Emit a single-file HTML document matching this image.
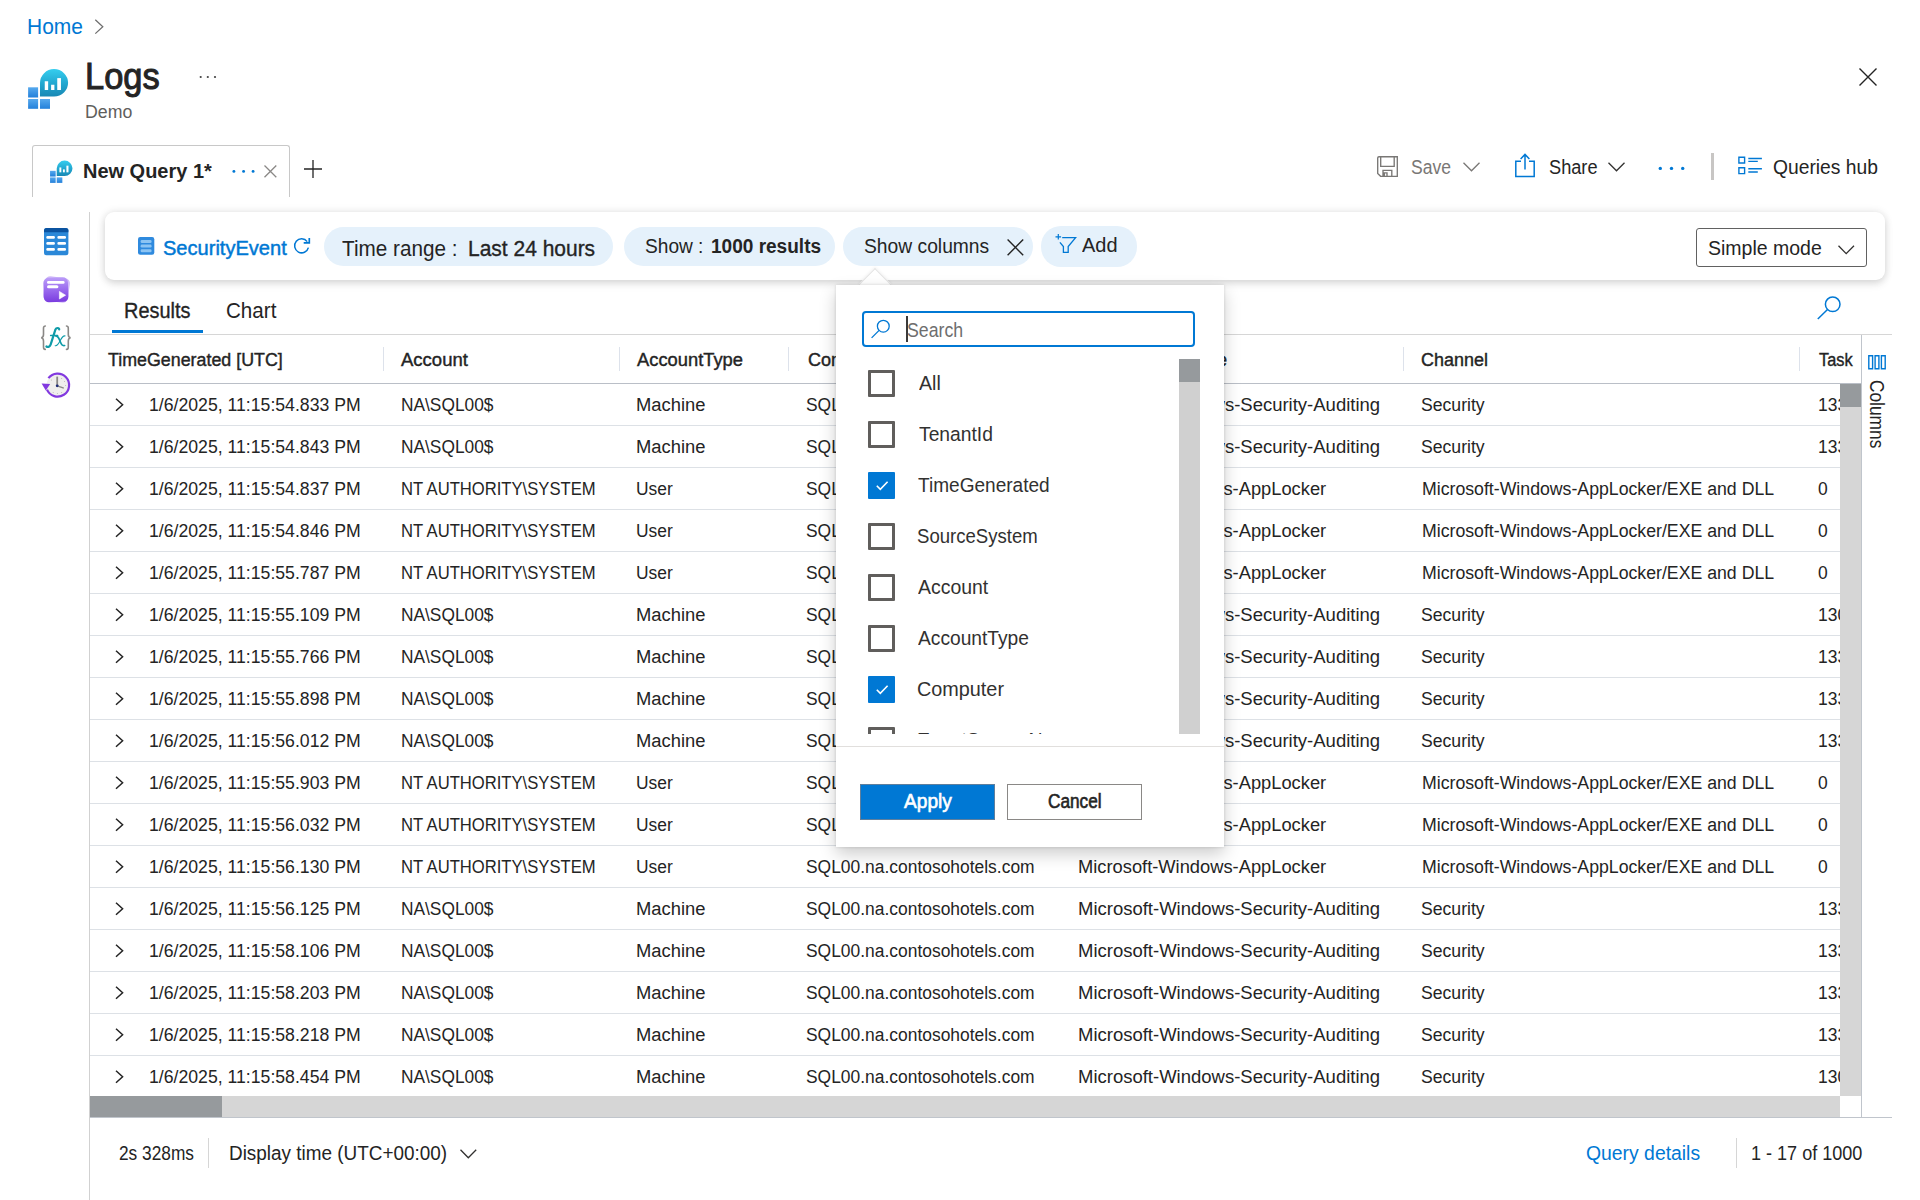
<!DOCTYPE html>
<html>
<head>
<meta charset="utf-8">
<title>Logs</title>
<style>
*{box-sizing:border-box;margin:0;padding:0}
html,body{width:1920px;height:1200px;overflow:hidden;background:#fff}
body{font-family:"Liberation Sans",sans-serif;color:#242424;position:relative}
.a{position:absolute}
.t{position:absolute;white-space:nowrap;line-height:1;color:#242424}
.blue{color:#0078d4}
.sb{font-weight:bold}
svg{position:absolute;overflow:visible}
/* ---------- header ---------- */
#home{left:27px;top:16px;font-size:20.4px;color:#0078d4}
#logs{left:84px;top:58px;font-size:36px;-webkit-text-stroke:1px #242424;color:#242424}
#demo{left:85px;top:102px;font-size:18px;color:#605e5c}
#tab{left:32px;top:145px;width:258px;height:52px;border:1px solid #c8c8c8;border-bottom:none;border-radius:3px 3px 0 0}
#tabname{left:84px;top:161px;font-size:19px;font-weight:bold}
.cmd{font-size:19px;top:157px}
/* ---------- toolbar card ---------- */
#card{left:105px;top:212px;width:1780px;height:68px;border-radius:9px;background:#fff;box-shadow:0 0 8px rgba(0,0,0,.11),0 4px 9px rgba(0,0,0,.11)}
.pill{position:absolute;top:227px;height:39px;border-radius:20px;background:#e5f1fb}
#navline{left:89px;top:212px;width:1px;height:988px;background:#d1d1d1}

/* ---------- table ---------- */
.hd{position:absolute;top:350px;font-size:17.5px;white-space:nowrap;line-height:1;color:#242424;-webkit-text-stroke:0.4px #242424}
.hs{position:absolute;top:347px;width:1px;height:24px;background:#dde2eb}
.row{position:absolute;left:90px;width:1750px;height:42px;border-bottom:1px solid #dde1e6;overflow:hidden}
.row span{position:absolute;top:12px;font-size:17.5px;line-height:1;white-space:nowrap;color:#242424}
.row svg{left:25px;top:14.4px}
.c1{left:60px}
.c2{left:312px}
.c3{left:547px}
.c4{left:717px}
.c5{left:988px}
.c6{left:1332px}
.c7{left:1728px}
.ft{font-size:19px;top:1144px}

/* ---------- popup ---------- */
#pop{left:836px;top:285px;width:388px;height:562px;background:#fff;box-shadow:0 0 3px rgba(0,0,0,.14),0 7px 16px rgba(0,0,0,.2)}
#beak{left:862.5px;top:273px;width:24px;height:24px;background:#fff;transform:rotate(45deg);border-left:1px solid #e4e4e4;border-top:1px solid #e4e4e4;box-shadow:-1px -1px 3px rgba(0,0,0,.05)}
#beakcover{left:850px;top:285px;width:50px;height:20px;background:#fff}
#sbox{left:862px;top:311px;width:333px;height:36px;border:2px solid #0078d4;border-radius:4px;background:#fff}
#list{left:836px;top:359px;width:364px;height:375px;overflow:hidden}
.cb{position:absolute;left:32px;width:27px;height:27px;border:3px solid #605e5c;border-radius:1px;background:#fff}
.cb.on{border:none;background:#0078d4}
.cb.on svg{left:0;top:0}
.lb{position:absolute;left:82px;font-size:19px;line-height:1;white-space:nowrap;color:#323130}
#apply{left:860px;top:784px;width:135px;height:36px;background:#0078d4;border:1px solid #5f7f9d}
#cancel{left:1007px;top:784px;width:135px;height:36px;background:#fff;border:1px solid #8a8886}
/*FIT*/
#home{font-size:21.5px !important;left:26.64px !important;top:17px !important;transform:scaleX(0.9746);transform-origin:0 0}
#logs{font-size:36px !important;left:85.20px !important;top:59px !important;transform:scaleX(0.9566);transform-origin:0 0}
#demo{font-size:18px !important;left:84.65px !important;top:103px !important;transform:scaleX(0.9843);transform-origin:0 0}
#tabname{font-size:19.5px !important;left:83.22px !important;top:162px !important;transform:scaleX(1.0243);transform-origin:0 0}
#save{font-size:19.5px !important;left:1411.04px !important;top:158px !important;transform:scaleX(0.8991);transform-origin:0 0}
#share{font-size:19.5px !important;left:1548.63px !important;top:158px !important;transform:scaleX(0.9326);transform-origin:0 0}
#qhub{font-size:19.5px !important;left:1773.43px !important;top:158px !important;transform:scaleX(0.9872);transform-origin:0 0}
#secev{font-size:19.5px !important;left:162.74px !important;top:239px !important;transform:scaleX(1.0283);transform-origin:0 0}
#tr1{font-size:21.5px !important;left:342.20px !important;top:239px !important;transform:scaleX(0.9629);transform-origin:0 0}
#tr2{font-size:21.5px !important;left:468.41px !important;top:239px !important;transform:scaleX(0.9756);transform-origin:0 0}
#sh1{font-size:19.5px !important;left:645.37px !important;top:237px !important;transform:scaleX(0.9801);transform-origin:0 0}
#sh2{font-size:19.5px !important;left:710.74px !important;top:237px !important;transform:scaleX(0.9761);transform-origin:0 0}
#sc{font-size:19.5px !important;left:864.17px !important;top:237px !important;transform:scaleX(0.9874);transform-origin:0 0}
#add{font-size:19.5px !important;left:1081.60px !important;top:236px !important;transform:scaleX(1.0244);transform-origin:0 0}
#simple{font-size:20.5px !important;left:1707.77px !important;top:238px !important;transform:scaleX(0.9510);transform-origin:0 0}
#results{font-size:21.5px !important;left:124.26px !important;top:301px !important;transform:scaleX(0.9259);transform-origin:0 0}
#chart{font-size:21.5px !important;left:225.90px !important;top:301px !important;transform:scaleX(0.9580);transform-origin:0 0}
#h1{font-size:18px !important;left:108.34px !important;top:351px !important;transform:scaleX(0.9906);transform-origin:0 0}
#h2{font-size:18px !important;left:401.37px !important;top:351px !important;transform:scaleX(1.0285);transform-origin:0 0}
#h3{font-size:18px !important;left:637.37px !important;top:351px !important;transform:scaleX(1.0184);transform-origin:0 0}
#h6{font-size:18px !important;left:1421.27px !important;top:351px !important;transform:scaleX(0.9973);transform-origin:0 0}
#h7{font-size:18px !important;left:1818.53px !important;top:351px !important;transform:scaleX(0.9072);transform-origin:0 0}
#f1{font-size:19.5px !important;left:119.33px !important;top:1144px !important;transform:scaleX(0.8864);transform-origin:0 0}
#f2{font-size:19.5px !important;left:229.10px !important;top:1144px !important;transform:scaleX(0.9701);transform-origin:0 0}
#f3{font-size:19.5px !important;left:1586.23px !important;top:1144px !important;transform:scaleX(0.9932);transform-origin:0 0}
#f4{font-size:19.5px !important;left:1750.91px !important;top:1144px !important;transform:scaleX(0.9255);transform-origin:0 0}
#srch{font-size:20.5px !important;left:907.03px !important;top:320px !important;transform:scaleX(0.8646);transform-origin:0 0}
#applyt{font-size:19.5px !important;left:903.88px !important;top:792px !important;transform:scaleX(0.9809);transform-origin:0 0}
#cancelt{font-size:19.5px !important;left:1047.60px !important;top:792px !important;transform:scaleX(0.8824);transform-origin:0 0}
.c1{font-size:18px !important;left:59.45px !important;top:12px !important;transform:scaleX(0.9806);transform-origin:0 0}
.c2m{font-size:18px !important;left:310.86px !important;top:12px !important;transform:scaleX(0.9623);transform-origin:0 0}
.c2u{font-size:18px !important;left:310.91px !important;top:12px !important;transform:scaleX(0.9235);transform-origin:0 0}
.c3m{font-size:18px !important;left:545.61px !important;top:12px !important;transform:scaleX(1.0201);transform-origin:0 0}
.c3u{font-size:18px !important;left:546.28px !important;top:12px !important;transform:scaleX(0.9654);transform-origin:0 0}
.c4{font-size:18px !important;left:715.87px !important;top:12px !important;transform:scaleX(0.9680);transform-origin:0 0}
.c5m{font-size:18px !important;left:987.65px !important;top:12px !important;transform:scaleX(1.0272);transform-origin:0 0}
.c5u{font-size:18px !important;left:987.79px !important;top:12px !important;transform:scaleX(1.0169);transform-origin:0 0}
.c6m{font-size:18px !important;left:1331.06px !important;top:12px !important;transform:scaleX(0.9787);transform-origin:0 0}
.c6u{font-size:18px !important;left:1332.44px !important;top:12px !important;transform:scaleX(0.9831);transform-origin:0 0}
#lb0{font-size:20.5px !important;left:82.98px !important;top:14px !important;transform:scaleX(0.9542);transform-origin:0 0}
#lb1{font-size:20.5px !important;left:82.99px !important;top:65px !important;transform:scaleX(0.9400);transform-origin:0 0}
#lb2{font-size:20.5px !important;left:82.00px !important;top:116px !important;transform:scaleX(0.9297);transform-origin:0 0}
#lb3{font-size:20.5px !important;left:81.19px !important;top:167px !important;transform:scaleX(0.9053);transform-origin:0 0}
#lb4{font-size:20.5px !important;left:82.00px !important;top:218px !important;transform:scaleX(0.9480);transform-origin:0 0}
#lb5{font-size:20.5px !important;left:82.00px !important;top:269px !important;transform:scaleX(0.9362);transform-origin:0 0}
#lb6{font-size:20.5px !important;left:81.31px !important;top:320px !important;transform:scaleX(0.9664);transform-origin:0 0}
#h4{font-size:18px !important;left:807.5px !important;top:351px !important;transform:scaleX(1.0032);transform-origin:0 0}
#h5{font-size:18px !important;left:1078.8px !important;top:351px !important;transform:scaleX(0.9801);transform-origin:0 0}
#lb7{font-size:20.5px !important;left:81.0px !important;top:371px !important;transform:scaleX(0.95);transform-origin:0 0}
.c7{left:1728.4px !important;font-size:18px !important;top:12px !important;transform:scaleX(0.97);transform-origin:0 0}
#colsv{font-size:19.5px !important;left:1885.5px !important;top:379.80px !important;transform:rotate(90deg) scaleX(0.8874) !important;transform-origin:0 0}
/*ENDFIT*/
</style>
</head>
<body>

<!-- breadcrumb -->
<div class="t" id="home">Home</div>
<svg style="left:94px;top:19px" width="10" height="16" viewBox="0 0 10 16"><path d="M1.3 0.8 L8.8 7.7 L1.3 14.6" fill="none" stroke="#6e6e6e" stroke-width="1.25"/></svg>

<!-- title -->
<div class="t" id="logs">Logs</div>
<div class="t" id="demo">Demo</div>

<!-- tab -->
<div class="a" id="tab"></div>
<div class="t" id="tabname">New Query 1*</div>


<!-- logo big -->
<svg style="left:28px;top:68px" width="41" height="41" viewBox="0 0 41 41">
  <defs>
    <linearGradient id="lg1" x1="0" y1="0" x2="0" y2="1"><stop offset="0" stop-color="#35cdee"/><stop offset="0.55" stop-color="#22a6cf"/><stop offset="1" stop-color="#1888b4"/></linearGradient>
    <linearGradient id="lg2" x1="0" y1="0" x2="0" y2="1"><stop offset="0" stop-color="#56a9ee"/><stop offset="1" stop-color="#2380da"/></linearGradient>
  </defs>
  <g id="logo">
  <rect x="0.1" y="19.3" width="10" height="10.2" fill="url(#lg2)"/>
  <rect x="0.1" y="31" width="10" height="9.8" fill="url(#lg2)"/>
  <rect x="12" y="31" width="10" height="9.8" fill="url(#lg2)"/>
  <path d="M12 14.85 A14.05 13.75 0 1 1 26.05 28.6 L12 28.6 Z" fill="url(#lg1)"/>
  <rect x="16.75" y="13.25" width="3.4" height="8.75" fill="#fff"/>
  <rect x="23.1" y="16.75" width="3.3" height="5.25" fill="#fff"/>
  <rect x="29.25" y="10.1" width="3.7" height="11.9" fill="#fff"/>
  </g>
</svg>
<!-- title ellipsis -->
<svg style="left:199px;top:75px" width="18" height="4" viewBox="0 0 18 4"><circle cx="1.7" cy="2" r="1.1" fill="#424242"/><circle cx="8.8" cy="2" r="1.1" fill="#424242"/><circle cx="16" cy="2" r="1.1" fill="#424242"/></svg>
<!-- close X -->
<svg style="left:1859px;top:68px" width="18" height="18" viewBox="0 0 18 18"><path d="M0.5 0.5 L17.5 17.5 M17.5 0.5 L0.5 17.5" stroke="#242424" stroke-width="1.4" fill="none"/></svg>

<!-- tab small logo -->
<svg style="left:49.5px;top:159.8px" width="23" height="23" viewBox="0 0 41 41">
  <rect x="0.1" y="19.3" width="10" height="10.2" fill="url(#lg2)"/>
  <rect x="0.1" y="31" width="10" height="9.8" fill="url(#lg2)"/>
  <rect x="12" y="31" width="10" height="9.8" fill="url(#lg2)"/>
  <path d="M12 14.85 A14.05 13.75 0 1 1 26.05 28.6 L12 28.6 Z" fill="url(#lg1)"/>
  <rect x="16.75" y="13.25" width="3.4" height="8.75" fill="#fff"/>
  <rect x="23.1" y="16.75" width="3.3" height="5.25" fill="#fff"/>
  <rect x="29.25" y="10.1" width="3.7" height="11.9" fill="#fff"/>
  </svg>
<!-- tab ellipsis (blue) -->
<svg style="left:231px;top:168.5px" width="25" height="5" viewBox="0 0 25 5"><circle cx="2.9" cy="2.4" r="1.45" fill="#0078d4"/><circle cx="12.6" cy="2.4" r="1.45" fill="#0078d4"/><circle cx="22.1" cy="2.4" r="1.45" fill="#0078d4"/></svg>
<!-- tab close -->
<svg style="left:264.3px;top:165.3px" width="13" height="13" viewBox="0 0 13 13"><path d="M0.5 0.5 L12.3 12.3 M12.3 0.5 L0.5 12.3" stroke="#8a8886" stroke-width="1.3" fill="none"/></svg>
<!-- plus -->
<svg style="left:304px;top:160px" width="18" height="18" viewBox="0 0 18 18"><path d="M9 0 V18 M0 9 H18" stroke="#242424" stroke-width="1.3" fill="none"/></svg>

<!-- Save -->
<svg style="left:1377px;top:156px" width="21" height="21" viewBox="0 0 21 21"><path d="M2 0.7 H20.3 V20.3 H3.6 L0.7 17.4 V2 Q0.7 0.7 2 0.7 Z M3.7 0.7 V10.4 H17.2 V0.7 M6 20.3 V14.4 H14.8 V20.3 M7.3 20.3 V16.9 H10 V20.3" fill="none" stroke="#797775" stroke-width="1.35"/></svg>
<div class="t cmd" id="save" style="left:1411px;color:#797775">Save</div>
<svg style="left:1462.8px;top:162px" width="17" height="10" viewBox="0 0 17 10"><path d="M0.5 0.7 L8.5 8.8 L16.5 0.7" fill="none" stroke="#797775" stroke-width="1.3"/></svg>
<!-- Share -->
<svg style="left:1515px;top:153px" width="21" height="25" viewBox="0 0 21 25"><path d="M6 8.2 H0.8 V23.6 H19.2 V8.2 H14 M10 16.5 V1.5 M5.6 5.9 L10 1.4 L14.4 5.9" fill="none" stroke="#0078d4" stroke-width="1.5"/></svg>
<div class="t cmd" id="share" style="left:1549px">Share</div>
<svg style="left:1608.4px;top:162px" width="17" height="10" viewBox="0 0 17 10"><path d="M0.5 0.7 L8.5 8.8 L16.5 0.7" fill="none" stroke="#323130" stroke-width="1.3"/></svg>
<!-- ellipsis blue -->
<svg style="left:1657px;top:166px" width="29" height="5" viewBox="0 0 29 5"><circle cx="3.3" cy="2.4" r="1.7" fill="#0078d4"/><circle cx="14.5" cy="2.4" r="1.7" fill="#0078d4"/><circle cx="25.7" cy="2.4" r="1.7" fill="#0078d4"/></svg>
<div class="a" style="left:1711px;top:153px;width:3px;height:27px;background:#c8c6c4"></div>
<!-- Queries hub -->
<svg style="left:1737px;top:156px" width="26" height="20" viewBox="0 0 26 20"><path d="M1.9 1.2 H7.6 V7 H1.9 Z M1.9 11.8 H7.6 V17.6 H1.9 Z M11.3 2.5 H24.9 M11.3 5.4 H20.8 M11.3 12.8 H24.9 M11.3 16 H20.8" fill="none" stroke="#0078d4" stroke-width="1.4"/></svg>
<div class="t cmd" id="qhub" style="left:1774px">Queries hub</div>

<div class="a" id="navline"></div>
<div class="a" id="card"></div>

<!-- left nav icons -->
<svg style="left:44px;top:228px" width="25" height="28" viewBox="0 0 25 28">
  <rect x="0" y="0" width="24.4" height="27.2" rx="2.5" fill="#2b88d8"/>
  <path d="M2.5 0 H21.9 Q24.4 0 24.4 2.5 V4.3 H0 V2.5 Q0 0 2.5 0 Z" fill="#0b53a0"/>
  <g fill="#fff"><rect x="2.3" y="8" width="8.6" height="2.8" rx="1.2"/><rect x="13.4" y="8" width="8.6" height="2.8" rx="1.2"/><rect x="2.3" y="14" width="8.6" height="2.8" rx="1.2"/><rect x="13.4" y="14" width="8.6" height="2.8" rx="1.2"/><rect x="2.3" y="20" width="8.6" height="2.8" rx="1.2"/><rect x="13.4" y="20" width="8.6" height="2.8" rx="1.2"/></g>
</svg>
<svg style="left:41px;top:275px" width="31" height="30" viewBox="0 0 31 30">
  <defs><linearGradient id="pg" x1="0" y1="0" x2="0" y2="1"><stop offset="0" stop-color="#bb9cf8"/><stop offset="0.5" stop-color="#9a6aee"/><stop offset="1" stop-color="#7a3cdf"/></linearGradient></defs>
  <rect x="3" y="2.2" width="25" height="24.6" rx="5" fill="#d2bcf9" transform="rotate(8 15.5 14.5)"/>
  <rect x="2.6" y="2.6" width="24.6" height="24.4" rx="5" fill="url(#pg)" transform="rotate(-2 15 15)"/>
  <rect x="6" y="6" width="17.6" height="2.8" rx="1.4" fill="#fff"/>
  <rect x="6" y="10.2" width="11.4" height="3" rx="1.5" fill="#fff"/>
  <path d="M18.4 16.4 L24.6 20.2 L18.4 24 Z" fill="#fff" stroke="#fff" stroke-width="0.6" stroke-linejoin="round"/>
</svg>
<svg style="left:40px;top:324px" width="32" height="28" viewBox="0 0 32 28" fill="none" stroke-linecap="round">
  <path d="M5.3 2 C3.2 2 3.5 4 3.5 6 V10.4 C3.5 12.4 2.7 13.5 1.2 13.7 C2.7 13.9 3.5 15 3.5 17 V21.4 C3.5 23.4 3.2 25.4 5.3 25.4" stroke="#8a8886" stroke-width="1.6"/>
  <path d="M26.5 2 C28.6 2 28.3 4 28.3 6 V10.4 C28.3 12.4 29.1 13.5 30.6 13.7 C29.1 13.9 28.3 15 28.3 17 V21.4 C28.3 23.4 28.6 25.4 26.5 25.4" stroke="#8a8886" stroke-width="1.6"/>
  <path d="M19.2 5.4 C19.2 3.7 16.4 3.2 15.3 5.8 L10.7 20.4 C10 22.6 8 23.5 6.4 22.5" stroke="#0f9ba8" stroke-width="2.2"/>
  <path d="M10.6 11.4 H17.6" stroke="#0f9ba8" stroke-width="1.5"/>
  <path d="M16 12.2 C18 12 18.6 13.6 20 17 C21.4 20.4 22 22 24.6 21.5" stroke="#0f9ba8" stroke-width="1.7"/>
  <path d="M25 11.9 C23 11.6 21 15 20 17 C19 19 17.4 22.3 15.2 21.7" stroke="#0f9ba8" stroke-width="1.1"/>
</svg>
<svg style="left:41px;top:372px" width="30" height="27" viewBox="0 0 30 27">
  <circle cx="16.4" cy="13.5" r="11" fill="#efeeed" stroke="none"/>
  <path d="M6 17.6 A11.5 11.5 0 1 0 7.4 6.2" fill="none" stroke="#8239df" stroke-width="2.2"/>
  <path d="M0.6 11.6 L9.2 12 L4.8 18.6 Z" fill="#8239df"/>
  <path d="M16.2 4.6 V13.8" fill="none" stroke="#8a8886" stroke-width="1.8"/>
  <path d="M16.2 13.8 L22.8 16.2" fill="none" stroke="#8a8886" stroke-width="1.4"/>
  <circle cx="16.2" cy="13.8" r="1.4" fill="#1f2d7a"/>
  <g fill="#b5b3b1"><circle cx="16.4" cy="21.6" r=".5"/><circle cx="24.6" cy="13.5" r=".5"/><circle cx="20.6" cy="6.4" r=".5"/><circle cx="23.5" cy="9.4" r=".5"/><circle cx="12.2" cy="20.6" r=".5"/><circle cx="20.6" cy="20.6" r=".5"/><circle cx="10.4" cy="8" r=".5"/></g>
</svg>

<!-- toolbar card contents -->
<svg style="left:138px;top:237px" width="17" height="18" viewBox="0 0 17 18">
  <rect x="0" y="0" width="16.3" height="17.8" rx="2.2" fill="#2f8ade"/>
  <rect x="2.6" y="3" width="11" height="3" rx="1.3" fill="#8cc4f3"/>
  <rect x="2.6" y="7.6" width="11" height="3" rx="1.3" fill="#8cc4f3"/>
  <rect x="2.6" y="12.2" width="11" height="3" rx="1.3" fill="#8cc4f3"/>
</svg>
<div class="t" id="secev" style="left:163px;top:238px;font-size:19px;color:#0078d4;-webkit-text-stroke:0.45px #0078d4">SecurityEvent</div>
<svg style="left:293px;top:238px" width="19" height="17" viewBox="0 0 19 17"><path d="M14.2 3.6 A7 7 0 1 0 15.4 9.6" fill="none" stroke="#0078d4" stroke-width="1.5"/><path d="M10.7 4.9 H16.3 V0" fill="none" stroke="#0078d4" stroke-width="1.7"/></svg>

<div class="pill" style="left:324px;width:289px"></div>
<div class="t" id="tr1" style="left:342px;top:238px;font-size:20.4px">Time range :</div>
<div class="t" id="tr2" style="left:469px;top:238px;font-size:20.4px;-webkit-text-stroke:0.35px #242424">Last 24 hours</div>

<div class="pill" style="left:624px;width:211px"></div>
<div class="t" id="sh1" style="left:646px;top:237px;font-size:19px">Show :</div>
<div class="t sb" id="sh2" style="left:711px;top:237px;font-size:19px">1000 results</div>

<div class="pill" style="left:843px;width:190px"></div>
<div class="t" id="sc" style="left:865px;top:237px;font-size:19px">Show columns</div>
<svg style="left:1007px;top:239px" width="17" height="17" viewBox="0 0 17 17"><path d="M0.6 0.6 L16.2 16.2 M16.2 0.6 L0.6 16.2" stroke="#242424" stroke-width="1.4" fill="none"/></svg>

<div class="pill" style="left:1041px;width:96px;top:226px;height:41px"></div>
<svg style="left:1055px;top:234px" width="22" height="20" viewBox="0 0 22 20"><path d="M7.2 3.7 H20.6 L13.2 12.6 V18.4 H8.4 V12.6 L4.9 8.3" fill="none" stroke="#0078d4" stroke-width="1.3" stroke-linejoin="miter"/><path d="M3.3 0.1 V5.5 M0.5 2.8 H6.1" stroke="#0078d4" stroke-width="1.2" fill="none"/></svg>
<div class="t" id="add" style="left:1081px;top:236px;font-size:19px">Add</div>

<div class="a" style="left:1696px;top:228px;width:171px;height:39px;border:1px solid #616161;border-radius:3px"></div>
<div class="t" id="simple" style="left:1708px;top:238px;font-size:19px">Simple mode</div>
<svg style="left:1838px;top:245px" width="17" height="10" viewBox="0 0 17 10"><path d="M0.5 0.7 L8.2 8.6 L16 0.7" fill="none" stroke="#323130" stroke-width="1.3"/></svg>

<!-- results tabs -->
<div class="t" id="results" style="left:124px;top:300px;font-size:20.4px;-webkit-text-stroke:0.35px #242424">Results</div>
<div class="a" style="left:112px;top:330px;width:91px;height:3px;background:#0078d4"></div>
<div class="t" id="chart" style="left:227px;top:300px;font-size:20.4px">Chart</div>
<svg style="left:1817px;top:296px" width="26" height="24" viewBox="0 0 26 24"><circle cx="15.7" cy="8.3" r="7.3" fill="none" stroke="#0078d4" stroke-width="1.5"/><path d="M10.5 13.5 L0.8 23" stroke="#0078d4" stroke-width="1.5" fill="none"/></svg>
<div class="a" style="left:90px;top:334px;width:1802px;height:1px;background:#d6d6d6"></div>


<!-- table header -->
<div class="hd" id="h1" style="left:108px">TimeGenerated [UTC]</div>
<div class="hd" id="h2" style="left:402px">Account</div>
<div class="hd" id="h3" style="left:637px">AccountType</div>
<div class="hd" id="h4" style="left:807px">Computer</div>
<div class="hd" id="h5" style="left:1078px">EventSourceName</div>
<div class="hd" id="h6" style="left:1422px">Channel</div>
<div class="hd" id="h7" style="left:1818px">Task</div>
<div class="hs" style="left:383px"></div>
<div class="hs" style="left:619px"></div>
<div class="hs" style="left:788px"></div>
<div class="hs" style="left:1059px"></div>
<div class="hs" style="left:1403px"></div>
<div class="hs" style="left:1799px"></div>
<div class="a" style="left:90px;top:383px;width:1771px;height:1px;background:#babfc7"></div>
<!-- rows -->
<div class="row" style="top:384px"><svg width="9" height="14" viewBox="0 0 9 14"><path d="M1 0.8 L7.6 6.8 L1 12.8" fill="none" stroke="#242424" stroke-width="1.5"/></svg><span class="c1">1/6/2025, 11:15:54.833 PM</span><span class="c2 c2m">NA\SQL00$</span><span class="c3 c3m">Machine</span><span class="c4">SQL00.na.contosohotels.com</span><span class="c5 c5m">Microsoft-Windows-Security-Auditing</span><span class="c6 c6m">Security</span><span class="c7 c7m">13312</span></div>
<div class="row" style="top:426px"><svg width="9" height="14" viewBox="0 0 9 14"><path d="M1 0.8 L7.6 6.8 L1 12.8" fill="none" stroke="#242424" stroke-width="1.5"/></svg><span class="c1">1/6/2025, 11:15:54.843 PM</span><span class="c2 c2m">NA\SQL00$</span><span class="c3 c3m">Machine</span><span class="c4">SQL00.na.contosohotels.com</span><span class="c5 c5m">Microsoft-Windows-Security-Auditing</span><span class="c6 c6m">Security</span><span class="c7 c7m">13312</span></div>
<div class="row" style="top:468px"><svg width="9" height="14" viewBox="0 0 9 14"><path d="M1 0.8 L7.6 6.8 L1 12.8" fill="none" stroke="#242424" stroke-width="1.5"/></svg><span class="c1">1/6/2025, 11:15:54.837 PM</span><span class="c2 c2u">NT AUTHORITY\SYSTEM</span><span class="c3 c3u">User</span><span class="c4">SQL00.na.contosohotels.com</span><span class="c5 c5u">Microsoft-Windows-AppLocker</span><span class="c6 c6u">Microsoft-Windows-AppLocker/EXE and DLL</span><span class="c7 c7u">0</span></div>
<div class="row" style="top:510px"><svg width="9" height="14" viewBox="0 0 9 14"><path d="M1 0.8 L7.6 6.8 L1 12.8" fill="none" stroke="#242424" stroke-width="1.5"/></svg><span class="c1">1/6/2025, 11:15:54.846 PM</span><span class="c2 c2u">NT AUTHORITY\SYSTEM</span><span class="c3 c3u">User</span><span class="c4">SQL00.na.contosohotels.com</span><span class="c5 c5u">Microsoft-Windows-AppLocker</span><span class="c6 c6u">Microsoft-Windows-AppLocker/EXE and DLL</span><span class="c7 c7u">0</span></div>
<div class="row" style="top:552px"><svg width="9" height="14" viewBox="0 0 9 14"><path d="M1 0.8 L7.6 6.8 L1 12.8" fill="none" stroke="#242424" stroke-width="1.5"/></svg><span class="c1">1/6/2025, 11:15:55.787 PM</span><span class="c2 c2u">NT AUTHORITY\SYSTEM</span><span class="c3 c3u">User</span><span class="c4">SQL00.na.contosohotels.com</span><span class="c5 c5u">Microsoft-Windows-AppLocker</span><span class="c6 c6u">Microsoft-Windows-AppLocker/EXE and DLL</span><span class="c7 c7u">0</span></div>
<div class="row" style="top:594px"><svg width="9" height="14" viewBox="0 0 9 14"><path d="M1 0.8 L7.6 6.8 L1 12.8" fill="none" stroke="#242424" stroke-width="1.5"/></svg><span class="c1">1/6/2025, 11:15:55.109 PM</span><span class="c2 c2m">NA\SQL00$</span><span class="c3 c3m">Machine</span><span class="c4">SQL00.na.contosohotels.com</span><span class="c5 c5m">Microsoft-Windows-Security-Auditing</span><span class="c6 c6m">Security</span><span class="c7 c7m">13060</span></div>
<div class="row" style="top:636px"><svg width="9" height="14" viewBox="0 0 9 14"><path d="M1 0.8 L7.6 6.8 L1 12.8" fill="none" stroke="#242424" stroke-width="1.5"/></svg><span class="c1">1/6/2025, 11:15:55.766 PM</span><span class="c2 c2m">NA\SQL00$</span><span class="c3 c3m">Machine</span><span class="c4">SQL00.na.contosohotels.com</span><span class="c5 c5m">Microsoft-Windows-Security-Auditing</span><span class="c6 c6m">Security</span><span class="c7 c7m">13312</span></div>
<div class="row" style="top:678px"><svg width="9" height="14" viewBox="0 0 9 14"><path d="M1 0.8 L7.6 6.8 L1 12.8" fill="none" stroke="#242424" stroke-width="1.5"/></svg><span class="c1">1/6/2025, 11:15:55.898 PM</span><span class="c2 c2m">NA\SQL00$</span><span class="c3 c3m">Machine</span><span class="c4">SQL00.na.contosohotels.com</span><span class="c5 c5m">Microsoft-Windows-Security-Auditing</span><span class="c6 c6m">Security</span><span class="c7 c7m">13312</span></div>
<div class="row" style="top:720px"><svg width="9" height="14" viewBox="0 0 9 14"><path d="M1 0.8 L7.6 6.8 L1 12.8" fill="none" stroke="#242424" stroke-width="1.5"/></svg><span class="c1">1/6/2025, 11:15:56.012 PM</span><span class="c2 c2m">NA\SQL00$</span><span class="c3 c3m">Machine</span><span class="c4">SQL00.na.contosohotels.com</span><span class="c5 c5m">Microsoft-Windows-Security-Auditing</span><span class="c6 c6m">Security</span><span class="c7 c7m">13312</span></div>
<div class="row" style="top:762px"><svg width="9" height="14" viewBox="0 0 9 14"><path d="M1 0.8 L7.6 6.8 L1 12.8" fill="none" stroke="#242424" stroke-width="1.5"/></svg><span class="c1">1/6/2025, 11:15:55.903 PM</span><span class="c2 c2u">NT AUTHORITY\SYSTEM</span><span class="c3 c3u">User</span><span class="c4">SQL00.na.contosohotels.com</span><span class="c5 c5u">Microsoft-Windows-AppLocker</span><span class="c6 c6u">Microsoft-Windows-AppLocker/EXE and DLL</span><span class="c7 c7u">0</span></div>
<div class="row" style="top:804px"><svg width="9" height="14" viewBox="0 0 9 14"><path d="M1 0.8 L7.6 6.8 L1 12.8" fill="none" stroke="#242424" stroke-width="1.5"/></svg><span class="c1">1/6/2025, 11:15:56.032 PM</span><span class="c2 c2u">NT AUTHORITY\SYSTEM</span><span class="c3 c3u">User</span><span class="c4">SQL00.na.contosohotels.com</span><span class="c5 c5u">Microsoft-Windows-AppLocker</span><span class="c6 c6u">Microsoft-Windows-AppLocker/EXE and DLL</span><span class="c7 c7u">0</span></div>
<div class="row" style="top:846px"><svg width="9" height="14" viewBox="0 0 9 14"><path d="M1 0.8 L7.6 6.8 L1 12.8" fill="none" stroke="#242424" stroke-width="1.5"/></svg><span class="c1">1/6/2025, 11:15:56.130 PM</span><span class="c2 c2u">NT AUTHORITY\SYSTEM</span><span class="c3 c3u">User</span><span class="c4">SQL00.na.contosohotels.com</span><span class="c5 c5u">Microsoft-Windows-AppLocker</span><span class="c6 c6u">Microsoft-Windows-AppLocker/EXE and DLL</span><span class="c7 c7u">0</span></div>
<div class="row" style="top:888px"><svg width="9" height="14" viewBox="0 0 9 14"><path d="M1 0.8 L7.6 6.8 L1 12.8" fill="none" stroke="#242424" stroke-width="1.5"/></svg><span class="c1">1/6/2025, 11:15:56.125 PM</span><span class="c2 c2m">NA\SQL00$</span><span class="c3 c3m">Machine</span><span class="c4">SQL00.na.contosohotels.com</span><span class="c5 c5m">Microsoft-Windows-Security-Auditing</span><span class="c6 c6m">Security</span><span class="c7 c7m">13312</span></div>
<div class="row" style="top:930px"><svg width="9" height="14" viewBox="0 0 9 14"><path d="M1 0.8 L7.6 6.8 L1 12.8" fill="none" stroke="#242424" stroke-width="1.5"/></svg><span class="c1">1/6/2025, 11:15:58.106 PM</span><span class="c2 c2m">NA\SQL00$</span><span class="c3 c3m">Machine</span><span class="c4">SQL00.na.contosohotels.com</span><span class="c5 c5m">Microsoft-Windows-Security-Auditing</span><span class="c6 c6m">Security</span><span class="c7 c7m">13312</span></div>
<div class="row" style="top:972px"><svg width="9" height="14" viewBox="0 0 9 14"><path d="M1 0.8 L7.6 6.8 L1 12.8" fill="none" stroke="#242424" stroke-width="1.5"/></svg><span class="c1">1/6/2025, 11:15:58.203 PM</span><span class="c2 c2m">NA\SQL00$</span><span class="c3 c3m">Machine</span><span class="c4">SQL00.na.contosohotels.com</span><span class="c5 c5m">Microsoft-Windows-Security-Auditing</span><span class="c6 c6m">Security</span><span class="c7 c7m">13312</span></div>
<div class="row" style="top:1014px"><svg width="9" height="14" viewBox="0 0 9 14"><path d="M1 0.8 L7.6 6.8 L1 12.8" fill="none" stroke="#242424" stroke-width="1.5"/></svg><span class="c1">1/6/2025, 11:15:58.218 PM</span><span class="c2 c2m">NA\SQL00$</span><span class="c3 c3m">Machine</span><span class="c4">SQL00.na.contosohotels.com</span><span class="c5 c5m">Microsoft-Windows-Security-Auditing</span><span class="c6 c6m">Security</span><span class="c7 c7m">13312</span></div>
<div class="row" style="top:1056px"><svg width="9" height="14" viewBox="0 0 9 14"><path d="M1 0.8 L7.6 6.8 L1 12.8" fill="none" stroke="#242424" stroke-width="1.5"/></svg><span class="c1">1/6/2025, 11:15:58.454 PM</span><span class="c2 c2m">NA\SQL00$</span><span class="c3 c3m">Machine</span><span class="c4">SQL00.na.contosohotels.com</span><span class="c5 c5m">Microsoft-Windows-Security-Auditing</span><span class="c6 c6m">Security</span><span class="c7 c7m">13060</span></div>
<!-- scrollbars -->
<div class="a" style="left:1840px;top:384px;width:21px;height:712px;background:#d6d6d6"></div>
<div class="a" style="left:1840px;top:384px;width:21px;height:23px;background:#969a9d"></div>
<div class="a" style="left:90px;top:1096px;width:1750px;height:21px;background:#d6d6d6"></div>
<div class="a" style="left:90px;top:1096px;width:132px;height:21px;background:#969a9d"></div>
<div class="a" style="left:1861px;top:335px;width:1px;height:782px;background:#c0c5cc"></div>
<div class="a" style="left:90px;top:1117px;width:1802px;height:1px;background:#c0c5cc"></div>
<!-- columns side -->
<svg style="left:1868px;top:355px" width="18" height="15" viewBox="0 0 18 15"><path d="M0.8 0.8 H4.6 V13.8 H0.8 Z M7.1 0.8 H10.9 V13.8 H7.1 Z M13.4 0.8 H17.2 V13.8 H13.4 Z" fill="none" stroke="#0078d4" stroke-width="1.4"/></svg>
<div class="t" id="colsv" style="left:1886.5px;top:379px;font-size:20px;transform-origin:0 0;transform:rotate(90deg) scaleX(0.95)">Columns</div>
<!-- footer -->
<div class="t ft" id="f1" style="left:120px">2s 328ms</div>
<div class="a" style="left:208px;top:1138px;width:1px;height:30px;background:#d6d6d6"></div>
<div class="t ft" id="f2" style="left:230px">Display time (UTC+00:00)</div>
<svg style="left:460px;top:1149px" width="17" height="10" viewBox="0 0 17 10"><path d="M0.5 0.7 L8.3 8.7 L16.2 0.7" fill="none" stroke="#323130" stroke-width="1.3"/></svg>
<div class="t ft" id="f3" style="left:1586px;color:#0078d4">Query details</div>
<div class="a" style="left:1736px;top:1138px;width:1px;height:30px;background:#d6d6d6"></div>
<div class="t ft" id="f4" style="left:1752px">1 - 17 of 1000</div>

<!-- popup -->
<div class="a" id="beak"></div>
<div class="a" id="pop"></div>
<div class="a" id="beakcover"></div>
<div class="a" id="sbox"></div>
<svg style="left:871px;top:319px" width="20" height="20" viewBox="0 0 20 20"><circle cx="12.3" cy="7.2" r="5.9" fill="none" stroke="#0078d4" stroke-width="1.3"/><path d="M8.1 11.4 L0.6 18.9" stroke="#0078d4" stroke-width="1.3" fill="none"/></svg>
<div class="a" style="left:906px;top:316px;width:2px;height:26px;background:#3b3a39"></div>
<div class="t" id="srch" style="left:907px;top:320px;font-size:19px;color:#6e6e6e">Search</div>
<div class="a" id="list">
<div class="cb" style="top:11px"></div><div class="lb" id="lb0" style="top:14px">All</div>
<div class="cb" style="top:62px"></div><div class="lb" id="lb1" style="top:65px">TenantId</div>
<div class="cb on" style="top:113px"><svg width="27" height="27" viewBox="0 0 27 27"><path d="M8.8 13.8 L12.3 17.3 L19.6 9.7" fill="none" stroke="#fff" stroke-width="1.6"/></svg></div><div class="lb" id="lb2" style="top:116px">TimeGenerated</div>
<div class="cb" style="top:164px"></div><div class="lb" id="lb3" style="top:167px">SourceSystem</div>
<div class="cb" style="top:215px"></div><div class="lb" id="lb4" style="top:218px">Account</div>
<div class="cb" style="top:266px"></div><div class="lb" id="lb5" style="top:269px">AccountType</div>
<div class="cb on" style="top:317px"><svg width="27" height="27" viewBox="0 0 27 27"><path d="M8.8 13.8 L12.3 17.3 L19.6 9.7" fill="none" stroke="#fff" stroke-width="1.6"/></svg></div><div class="lb" id="lb6" style="top:320px">Computer</div>
<div class="cb" style="top:368px"></div><div class="lb" id="lb7" style="top:371px">EventSourceName</div>
<div class="a" style="left:343px;top:0;width:21px;height:375px;background:#d0d0d0"></div>
<div class="a" style="left:343px;top:0;width:21px;height:23px;background:#969a9d"></div>
</div>
<div class="a" style="left:836px;top:746px;width:388px;height:1px;background:#e1dfdd"></div>
<div class="a" id="apply"></div><div class="t" id="applyt" style="left:904px;top:792px;font-size:19px;color:#fff;-webkit-text-stroke:0.6px #fff">Apply</div>
<div class="a" id="cancel"></div><div class="t" id="cancelt" style="left:1048px;top:792px;font-size:19px;color:#242424;-webkit-text-stroke:0.6px #242424">Cancel</div>
</body>
</html>
